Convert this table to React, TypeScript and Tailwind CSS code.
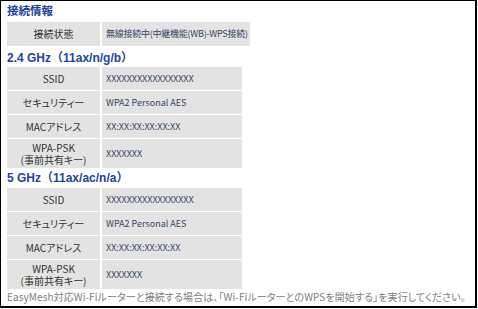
const jp = "font-['Noto_Sans_CJK_JP','Liberation_Sans',sans-serif] [font-feature-settings:'palt']";
const head = "font-['Liberation_Sans','Noto_Sans_CJK_JP',sans-serif] font-bold text-[#24459a]";

type Row = { label: React.ReactNode; value: string; tall?: boolean };

function InfoTable({
  rows,
  valueWidth,
  rowHeight,
  valueTrack = '',
}: {
  rows: Row[];
  valueWidth: string;
  rowHeight: string;
  valueTrack?: string;
}) {
  return (
    <table className="table-fixed border-separate border-spacing-x-[2px] border-spacing-y-[1px]">
      <tbody>
        {rows.map((r, i) => (
          <tr key={i}>
            <td
              className={`w-[93px] bg-[#e3e3e3] p-0 text-center align-middle text-[10px] leading-[12px] text-[#333] ${jp} ${
                r.tall ? 'h-[29px]' : rowHeight
              }`}
            >
              {r.label}
            </td>
            <td
              className={`${valueWidth} ${valueTrack} overflow-hidden whitespace-nowrap bg-[#e3e3e3] py-0 pl-[4px] pr-0 align-middle text-[9px] text-[#3a4668] ${jp}`}
            >
              {r.value}
            </td>
          </tr>
        ))}
      </tbody>
    </table>
  );
}

const bandRows: Row[] = [
  { label: 'SSID', value: 'XXXXXXXXXXXXXXXXX' },
  { label: 'セキュリティー', value: 'WPA2 Personal AES' },
  { label: 'MACアドレス', value: 'XX:XX:XX:XX:XX:XX' },
  {
    label: (
      <>
        WPA-PSK
        <br />
        (事前共有キー)
      </>
    ),
    value: 'XXXXXXX',
    tall: true,
  },
];

export default function App() {
  return (
    <div className="h-[309px] w-[478px] bg-white">
      <div className="h-[308px] w-[477px] border-t border-l border-r-2 border-b-2 border-black pl-[4px]">
        <h2 className={`h-[20px] pt-[2px] pl-[2px] text-[11.5px] leading-[16px] ${head}`}>接続情報</h2>
        <InfoTable
          rows={[{ label: '接続状態', value: '無線接続中(中継機能(WB)-WPS接続)' }]}
          valueWidth="w-[148px]"
          rowHeight="h-[24px]"
          valueTrack="tracking-[-0.25px]"
        />
        <h3 className={`h-[19px] pt-[3px] pl-[2px] text-[12px] leading-[17px] ${head}`}>
          2.4 GHz（11ax/n/g/b）
        </h3>
        <InfoTable rows={bandRows} valueWidth="w-[140px]" rowHeight="h-[23px]" />
        <h3 className={`h-[18px] pt-[1px] pl-[2px] text-[12px] leading-[17px] ${head}`}>
          5 GHz（11ax/ac/n/a）
        </h3>
        <InfoTable rows={bandRows} valueWidth="w-[140px]" rowHeight="h-[23px]" />
        <p className={`pl-[2px] text-[10px] tracking-[0.1px] leading-[14px] text-[#808080] ${jp}`}>
          EasyMesh対応Wi-Fiルーターと接続する場合は、「Wi-FiルーターとのWPSを開始する」を実行してください。
        </p>
      </div>
    </div>
  );
}
